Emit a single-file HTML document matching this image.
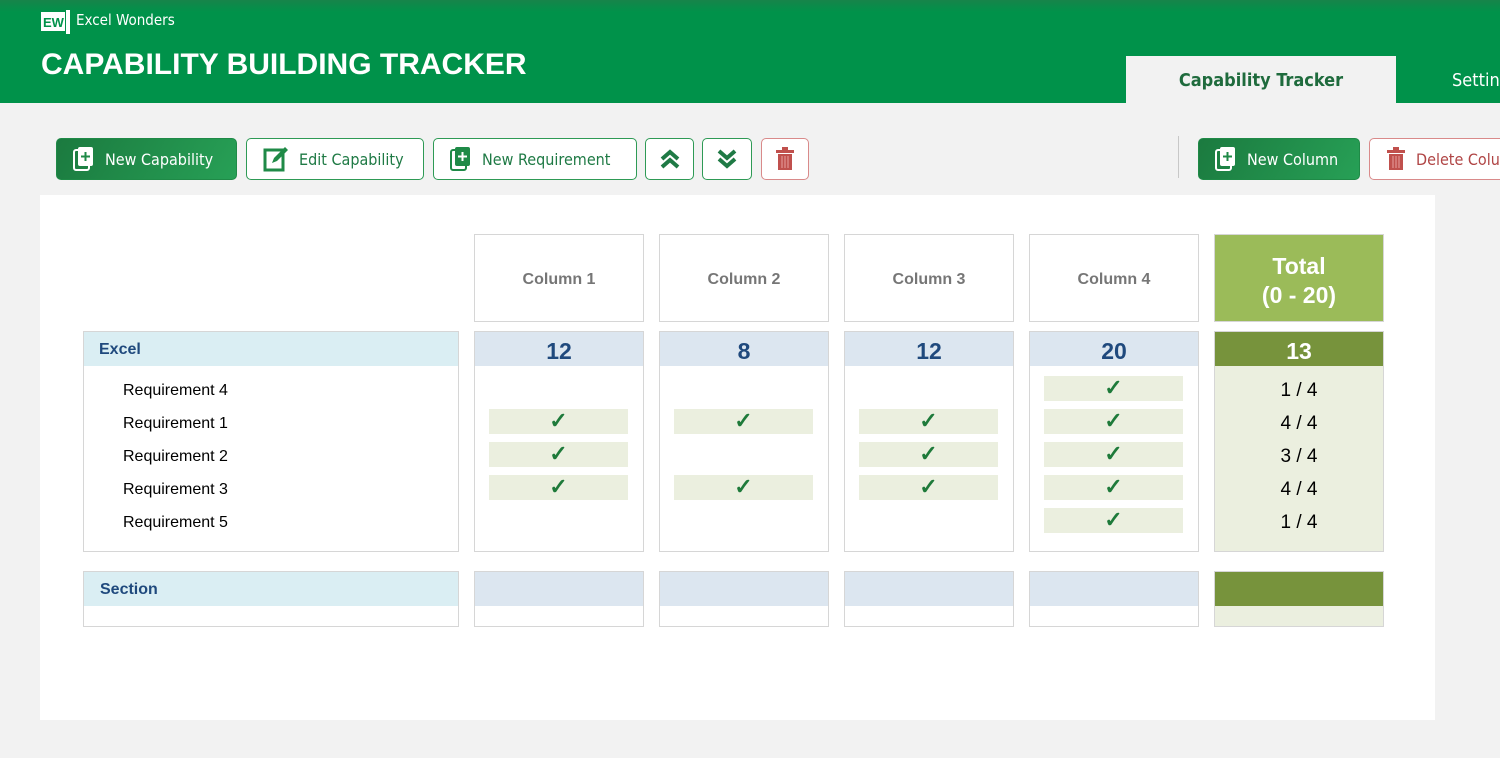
<!DOCTYPE html>
<html><head><meta charset="utf-8"><style>
*{margin:0;padding:0;box-sizing:border-box}
body{width:1500px;height:758px;background:#f2f2f2;font-family:"Liberation Sans",sans-serif;position:relative;overflow:hidden}
.a{position:absolute}
.hdr{left:0;top:0;width:1500px;height:103px;background:linear-gradient(#17844a 0,#00924a 12px,#00924a)}
.btn{position:absolute;top:138px;height:42px;border:1px solid #2e9a55;border-radius:5px;background:#fff;color:#1f7a45;font-family:"DejaVu Sans Condensed","Liberation Sans",sans-serif;font-size:16px;display:flex;align-items:center;padding-left:16px;gap:10px}
.btn.f{background:linear-gradient(120deg,#1b7a3f,#27a056);color:#fff;border-color:#1f8a47}
.btn.r{border-color:#d98a8a;color:#b04545}
.box{position:absolute;border:1px solid #d6d6d6;background:#fff}
.ch{color:#767676;font-weight:bold;font-size:16px;display:flex;align-items:center;justify-content:center;padding-top:3px}
.strip{position:absolute;left:0;top:0;right:0;height:34px;background:#dce6f0;color:#1f497d;font-weight:bold;font-size:23px;text-align:center;line-height:38px}
.cell{position:absolute;width:139px;height:25px;background:#ebefdf;color:#1e7a3a;font-size:22px;font-weight:bold;text-align:center;line-height:24px}
.req{position:absolute;left:123px;font-size:16px;color:#000}
.tv{position:absolute;left:1214px;width:170px;text-align:center;font-size:19px;color:#000}
</style></head><body>
<div class="a hdr"></div>
<svg class="a" style="left:41px;top:10px" width="32" height="24" viewBox="0 0 32 24"><rect x="0" y="2" width="24" height="19" fill="#fff"/><rect x="25" y="0" width="4" height="24" fill="#fff"/><text x="2" y="17" font-family="Liberation Sans" font-weight="bold" font-size="13" fill="#00924a">EW</text></svg>
<div class="a" style="left:76px;top:11px;color:#fff;font-family:'DejaVu Sans Condensed',sans-serif;font-size:15px">Excel Wonders</div>
<div class="a" style="left:41px;top:48px;color:#fff;font-weight:bold;font-size:30px">CAPABILITY BUILDING TRACKER</div>
<div class="a" style="left:1126px;top:56px;width:270px;height:47px;background:#f2f2f2;color:#1f6b3d;font-family:'DejaVu Sans Condensed',sans-serif;font-weight:bold;font-size:18px;text-align:center;line-height:50px">Capability Tracker</div>
<div class="a" style="left:1452px;top:56px;height:47px;color:#fff;font-family:'DejaVu Sans Condensed',sans-serif;font-size:18px;line-height:50px">Settings</div>

<div class="btn f" style="left:56px;width:181px"><svg width="22" height="26" viewBox="0 0 22 26"><rect x="1" y="4" width="15" height="20" rx="2" fill="none" stroke="#fff" stroke-width="2"/><rect x="5" y="1" width="15" height="19" rx="2" fill="#fff"/><path d="M12.5 6v9M8 10.5h9" stroke="#1f8a47" stroke-width="2"/></svg>New Capability</div>
<div class="btn" style="left:246px;width:178px"><svg width="26" height="26" viewBox="0 0 26 26"><rect x="2" y="4" width="18" height="20" fill="none" stroke="#1f8a47" stroke-width="3"/><path d="M9 17l2-5L22 1l3 3L14 15z" fill="#1f8a47"/></svg>Edit Capability</div>
<div class="btn" style="left:433px;width:204px"><svg width="22" height="26" viewBox="0 0 22 26"><rect x="1" y="4" width="15" height="20" rx="2" fill="none" stroke="#1f8a47" stroke-width="2"/><rect x="5" y="1" width="15" height="19" rx="2" fill="#1f8a47"/><path d="M12.5 6v9M8 10.5h9" stroke="#fff" stroke-width="2"/></svg>New Requirement</div>
<div class="btn" style="left:645px;width:49px;padding:0;justify-content:center"><svg width="20" height="20" viewBox="0 0 20 20"><path d="M2 10l8-7 8 7M2 18l8-7 8 7" fill="none" stroke="#1f7a45" stroke-width="4"/></svg></div>
<div class="btn" style="left:702px;width:50px;padding:0;justify-content:center"><svg width="20" height="20" viewBox="0 0 20 20"><path d="M2 2l8 7 8-7M2 10l8 7 8-7" fill="none" stroke="#1f7a45" stroke-width="4"/></svg></div>
<div class="btn r" style="left:761px;width:48px;padding:0;justify-content:center"><svg width="20" height="24" viewBox="0 0 20 24"><rect x="1" y="3" width="18" height="3" fill="#c0504d"/><rect x="7" y="0" width="6" height="3" fill="#c0504d"/><rect x="3" y="7" width="14" height="16" fill="#c0504d"/><path d="M7 9v12M10 9v12M13 9v12" stroke="#e8a09e" stroke-width="1"/></svg></div>
<div class="a" style="left:1178px;top:136px;width:1px;height:42px;background:#c8c8c8"></div>
<div class="btn f" style="left:1198px;width:162px"><svg width="22" height="26" viewBox="0 0 22 26"><rect x="1" y="4" width="15" height="20" rx="2" fill="none" stroke="#fff" stroke-width="2"/><rect x="5" y="1" width="15" height="19" rx="2" fill="#fff"/><path d="M12.5 6v9M8 10.5h9" stroke="#1f8a47" stroke-width="2"/></svg>New Column</div>
<div class="btn r" style="left:1369px;width:170px"><svg width="20" height="24" viewBox="0 0 20 24"><rect x="1" y="3" width="18" height="3" fill="#c0504d"/><rect x="7" y="0" width="6" height="3" fill="#c0504d"/><rect x="3" y="7" width="14" height="16" fill="#c0504d"/><path d="M7 9v12M10 9v12M13 9v12" stroke="#e8a09e" stroke-width="1"/></svg>Delete Column</div>

<div class="a" style="left:40px;top:195px;width:1395px;height:525px;background:#fff"></div>

<div class="box ch" style="left:474px;top:234px;width:170px;height:88px">Column 1</div>
<div class="box ch" style="left:659px;top:234px;width:170px;height:88px">Column 2</div>
<div class="box ch" style="left:844px;top:234px;width:170px;height:88px">Column 3</div>
<div class="box ch" style="left:1029px;top:234px;width:170px;height:88px">Column 4</div>
<div class="box" style="left:1214px;top:234px;width:170px;height:88px;background:#9bbb59;border-color:#d6d6d6;color:#fff;font-weight:bold;font-size:23px;text-align:center;padding-top:17px;line-height:29px">Total<br>(0 - 20)</div>

<div class="box" style="left:83px;top:331px;width:376px;height:221px"><div class="strip" style="background:#daeef3;text-align:left;padding-left:15px;font-size:16px;line-height:36px">Excel</div></div>
<div class="box" style="left:474px;top:331px;width:170px;height:221px"><div class="strip">12</div></div>
<div class="box" style="left:659px;top:331px;width:170px;height:221px"><div class="strip">8</div></div>
<div class="box" style="left:844px;top:331px;width:170px;height:221px"><div class="strip">12</div></div>
<div class="box" style="left:1029px;top:331px;width:170px;height:221px"><div class="strip">20</div></div>
<div class="box" style="left:1214px;top:331px;width:170px;height:221px;background:#ebefdf"><div class="strip" style="background:#77933c;color:#fff">13</div></div>

<div class="req" style="top:382px">Requirement 4</div>
<div class="req" style="top:415px">Requirement 1</div>
<div class="req" style="top:448px">Requirement 2</div>
<div class="req" style="top:481px">Requirement 3</div>
<div class="req" style="top:514px">Requirement 5</div>

<div class="cell" style="left:1044px;top:376px">✓</div>
<div class="cell" style="left:489px;top:409px">✓</div>
<div class="cell" style="left:674px;top:409px">✓</div>
<div class="cell" style="left:859px;top:409px">✓</div>
<div class="cell" style="left:1044px;top:409px">✓</div>
<div class="cell" style="left:489px;top:442px">✓</div>
<div class="cell" style="left:859px;top:442px">✓</div>
<div class="cell" style="left:1044px;top:442px">✓</div>
<div class="cell" style="left:489px;top:475px">✓</div>
<div class="cell" style="left:674px;top:475px">✓</div>
<div class="cell" style="left:859px;top:475px">✓</div>
<div class="cell" style="left:1044px;top:475px">✓</div>
<div class="cell" style="left:1044px;top:508px">✓</div>

<div class="tv" style="top:380px">1 / 4</div>
<div class="tv" style="top:413px">4 / 4</div>
<div class="tv" style="top:446px">3 / 4</div>
<div class="tv" style="top:479px">4 / 4</div>
<div class="tv" style="top:512px">1 / 4</div>

<div class="box" style="left:83px;top:571px;width:376px;height:56px"><div class="strip" style="background:#daeef3;text-align:left;padding-left:16px;font-size:16px;line-height:36px">Section</div></div>
<div class="box" style="left:474px;top:571px;width:170px;height:56px"><div class="strip"></div></div>
<div class="box" style="left:659px;top:571px;width:170px;height:56px"><div class="strip"></div></div>
<div class="box" style="left:844px;top:571px;width:170px;height:56px"><div class="strip"></div></div>
<div class="box" style="left:1029px;top:571px;width:170px;height:56px"><div class="strip"></div></div>
<div class="box" style="left:1214px;top:571px;width:170px;height:56px;background:#ebefdf"><div class="strip" style="background:#77933c"></div></div>
</body></html>
